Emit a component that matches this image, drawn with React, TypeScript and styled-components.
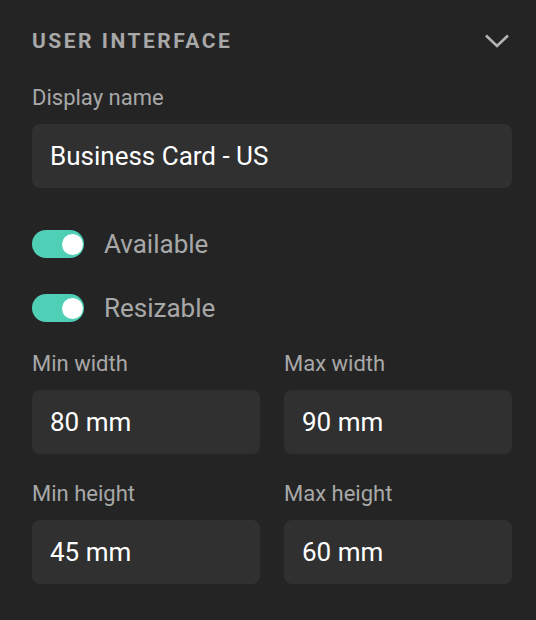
import styled, { createGlobalStyle } from 'styled-components';

const GlobalStyle = createGlobalStyle`
  html, body {
    margin: 0;
    padding: 0;
    background: #242424;
  }
  body {
    font-family: Roboto, 'Liberation Sans', sans-serif;
    -webkit-font-smoothing: antialiased;
  }
`;

const Panel = styled.section`
  width: 536px;
  height: 620px;
  box-sizing: border-box;
  padding: 24px 24px 0 32px;
  background: #242424;
  display: flex;
  flex-direction: column;
`;

const Header = styled.div`
  height: 34px;
  display: flex;
  align-items: center;
  justify-content: space-between;
`;

const Title = styled.h3`
  margin: 0;
  font-size: 21px;
  font-weight: 700;
  letter-spacing: 2.5px;
  color: #a8a8a8;
`;

const Chevron = styled.svg`
  width: 26px;
  height: 16px;
  margin-right: 2px;
`;

const Field = styled.div<{ $top?: number }>`
  display: flex;
  flex-direction: column;
  gap: 14px;
  margin-top: ${(p) => p.$top ?? 0}px;
`;

const Label = styled.label`
  font-size: 22px;
  line-height: 24px;
  color: #a8a8a8;
`;

const Input = styled.div`
  height: 64px;
  box-sizing: border-box;
  padding: 0 18px;
  display: flex;
  align-items: center;
  background: #303030;
  border-radius: 8px;
  font-size: 26px;
  font-weight: 400;
  color: #ffffff;
`;

const ToggleRow = styled.div<{ $top: number }>`
  display: flex;
  align-items: center;
  gap: 20px;
  height: 28px;
  margin-top: ${(p) => p.$top}px;
`;

const Track = styled.span`
  position: relative;
  width: 52px;
  height: 28px;
  border-radius: 14px;
  background: #4ecfb6;
  flex-shrink: 0;
`;

const Knob = styled.span`
  position: absolute;
  top: 3.5px;
  right: 1px;
  width: 21px;
  height: 21px;
  border-radius: 50%;
  background: #ffffff;
`;

const ToggleText = styled.span`
  font-size: 26px;
  color: #a8a8a8;
`;

const Grid = styled.div`
  display: grid;
  grid-template-columns: 1fr 1fr;
  column-gap: 24px;
  row-gap: 28px;
  margin-top: 30px;
`;

const Toggle = ({ label, top }: { label: string; top: number }) => (
  <ToggleRow $top={top}>
    <Track>
      <Knob />
    </Track>
    <ToggleText>{label}</ToggleText>
  </ToggleRow>
);

const sizes = [
  { label: 'Min width', value: '80 mm' },
  { label: 'Max width', value: '90 mm' },
  { label: 'Min height', value: '45 mm' },
  { label: 'Max height', value: '60 mm' },
];

export default function App() {
  return (
    <>
      <GlobalStyle />
      <Panel>
        <Header>
          <Title>USER INTERFACE</Title>
          <Chevron viewBox="0 0 26 16" fill="none">
            <path d="M2 2.5 L13 13 L24 2.5" stroke="#b4b4b4" strokeWidth="2.6" />
          </Chevron>
        </Header>
        <Field $top={28}>
          <Label>Display name</Label>
          <Input>Business Card - US</Input>
        </Field>
        <Toggle label="Available" top={42} />
        <Toggle label="Resizable" top={36} />
        <Grid>
          {sizes.map((s) => (
            <Field key={s.label}>
              <Label>{s.label}</Label>
              <Input>{s.value}</Input>
            </Field>
          ))}
        </Grid>
      </Panel>
    </>
  );
}
